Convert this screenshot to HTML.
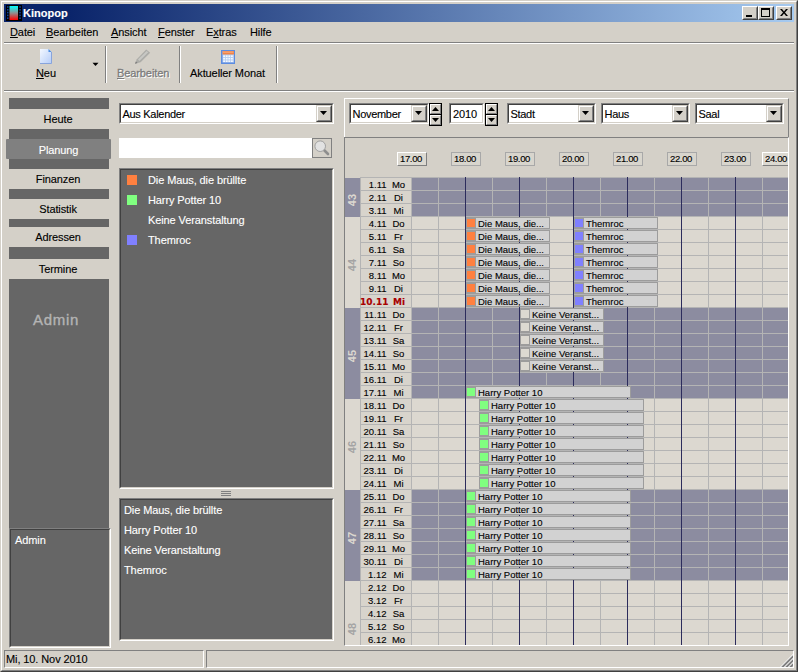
<!DOCTYPE html>
<html lang="de"><head><meta charset="utf-8"><title>Kinopop</title>
<style>
html,body{margin:0;padding:0;}
body{width:798px;height:672px;overflow:hidden;background:#d4d0c8;font-family:"Liberation Sans",sans-serif;font-size:11px;color:#000;}
#w{position:relative;width:798px;height:672px;overflow:hidden;background:#d4d0c8;}
#w div{position:absolute;box-sizing:border-box;-webkit-text-stroke:0.12px currentColor;}
.t{white-space:nowrap;line-height:13px;height:13px;letter-spacing:-0.1px;}
.tc{white-space:nowrap;line-height:13px;height:13px;text-align:center;letter-spacing:-0.1px;}
.tr{white-space:nowrap;line-height:13px;height:13px;text-align:right;letter-spacing:-0.1px;}
u{text-decoration:underline;text-decoration-thickness:1px;text-underline-offset:1px;}
.sunk{border:1px solid;border-color:#808080 #fff #fff #808080;}
.sunk>.in{left:0;top:0;right:0;bottom:0;border:1px solid;border-color:#404040 #d4d0c8 #d4d0c8 #404040;background:#fff;}
.btn{background:#d4d0c8;border:1px solid;border-color:#fff #404040 #404040 #fff;}
.btn>.in{left:0;top:0;right:0;bottom:0;border:1px solid;border-color:#d4d0c8 #808080 #808080 #d4d0c8;}
.cbtn{background:#d4d0c8;border:1px solid;border-color:#d4d0c8 #404040 #404040 #d4d0c8;}
.cbtn>.in{left:0;top:0;right:0;bottom:0;border:1px solid;border-color:#fff #808080 #808080 #fff;}
.arr{width:0;height:0;border-left:3.5px solid transparent;border-right:3.5px solid transparent;border-top:4px solid #000;}
.sep{width:2px;border-left:1px solid #808080;border-right:1px solid #fff;}
.dk{background:#666;}
.hl{background:#b4b4b4;height:1px;}
.vl{background:#b4b4b4;width:1px;}
.vd{background:#2c2c5c;width:1px;}
.ev{background:#9c9c9c;height:12px;overflow:hidden;font-size:9.5px;}
.ev i{position:absolute;left:1px;top:2px;width:8px;height:8px;display:block;}
.ev b{position:absolute;left:10px;top:1px;right:1px;bottom:1px;background:#d2d2d2;display:block;}
.ev span{position:absolute;left:12px;top:0px;line-height:13px;white-space:nowrap;}
.hb{background:#d8d5cd;border:1px solid #a8a8a8;width:30px;height:14px;line-height:11px;text-align:center;letter-spacing:-0.35px;font-size:9.5px;padding-right:2px;}
.hb.r{border-color:#fff #808080 #808080 #fff;background:#dcd9d1;}
.cd{font-size:9.5px;letter-spacing:0;}
.dc{background:#d8d4cc;}
</style></head><body><div id="w">

<div style="left:0px;top:0px;width:798px;height:672px;border:1px solid;border-color:#d4d0c8 #404040 #404040 #d4d0c8;"></div>
<div style="left:1px;top:1px;width:796px;height:670px;border:1px solid;border-color:#fff #808080 #808080 #fff;"></div>
<div style="left:4px;top:4px;width:790px;height:18px;background:linear-gradient(to right,#0a246a 0%,#0a246a 8%,#a6caf0 100%);"></div>
<svg style="position:absolute;left:6px;top:5px" width="16" height="16" viewBox="0 0 16 16"><defs><linearGradient id="fg" x1="0" y1="0" x2="0" y2="1"><stop offset="0" stop-color="#00ffff"/><stop offset="0.5" stop-color="#909090"/><stop offset="1" stop-color="#ff0000"/></linearGradient></defs><rect x="0" y="0" width="16" height="16" fill="#000"/><rect x="3.5" y="1" width="8.5" height="14" fill="url(#fg)"/><rect x="1" y="1.2" width="1.5" height="1.6" fill="#1040a0"/><rect x="13.3" y="1.2" width="1.5" height="1.6" fill="#1040a0"/><rect x="1" y="4" width="1.5" height="1.6" fill="#1040a0"/><rect x="13.3" y="4" width="1.5" height="1.6" fill="#1040a0"/><rect x="1" y="6.8" width="1.5" height="1.6" fill="#1040a0"/><rect x="13.3" y="6.8" width="1.5" height="1.6" fill="#1040a0"/><rect x="1" y="9.6" width="1.5" height="1.6" fill="#1040a0"/><rect x="13.3" y="9.6" width="1.5" height="1.6" fill="#1040a0"/><rect x="1" y="12.4" width="1.5" height="1.6" fill="#1040a0"/><rect x="13.3" y="12.4" width="1.5" height="1.6" fill="#1040a0"/></svg>
<div class="t" style="left:23px;top:7px;color:#fff;font-weight:bold;letter-spacing:0;">Kinopop</div>
<div class="btn" style="left:742px;top:6px;width:16px;height:14px;"><div class="in"></div><div style="left:3px;top:8px;width:6px;height:2px;background:#000;"></div></div>
<div class="btn" style="left:758px;top:6px;width:16px;height:14px;"><div class="in"></div><div style="left:2px;top:1px;width:9px;height:9px;border:1px solid #000;border-top:2px solid #000;"></div></div>
<div class="btn" style="left:776px;top:6px;width:16px;height:14px;"><div class="in"></div><svg style="position:absolute;left:3px;top:2px" width="8" height="7" viewBox="0 0 8 7"><path d="M0 0h2l2 2.5L6 0h2L5 3.5 8 7H6L4 4.5 2 7H0l3-3.5z" fill="#000"/></svg></div>
<div class="t" style="left:10px;top:26px;"><u>D</u>atei</div>
<div class="t" style="left:46px;top:26px;"><u>B</u>earbeiten</div>
<div class="t" style="left:111px;top:26px;"><u>A</u>nsicht</div>
<div class="t" style="left:158px;top:26px;"><u>F</u>enster</div>
<div class="t" style="left:206px;top:26px;">E<u>x</u>tras</div>
<div class="t" style="left:250px;top:26px;">Hilfe</div>
<div style="left:4px;top:42px;width:790px;height:2px;border-top:1px solid #808080;border-bottom:1px solid #fff;"></div>
<svg style="position:absolute;left:39px;top:48px" width="14" height="17" viewBox="0 0 14 17"><defs><linearGradient id="pg" x1="0" y1="0" x2="1" y2="1"><stop offset="0" stop-color="#f4f8ff"/><stop offset="1" stop-color="#b4ccf8"/></linearGradient></defs><path d="M1 1h8.5l3 3v12h-11.5z" fill="url(#pg)"/><path d="M1 15.5h11.5v-11.5" fill="none" stroke="#88a4dc" stroke-width="1"/><path d="M9.5 1l3 3h-3z" fill="#4c8ce0"/></svg>
<div class="t" style="left:36px;top:67px;"><u>N</u>eu</div>
<svg style="position:absolute;left:92px;top:62px" width="8" height="5" viewBox="0 0 8 5"><path d="M0.5 0.8h6L3.5 4z" fill="#000"/></svg>
<div class="sep" style="left:105px;top:46px;width:2px;height:37px;"></div>
<svg style="position:absolute;left:134px;top:49px" width="18" height="17" viewBox="0 0 18 17"><defs><linearGradient id="pn" x1="0" y1="0" x2="1" y2="1"><stop offset="0" stop-color="#d4d4d0"/><stop offset="1" stop-color="#a4a4a0"/></linearGradient></defs><path d="M1 14.8L2.8 10.2 12.2 0.6 16.2 3.8 6.6 13.2z" fill="#acaca8"/><path d="M4 10.6L12.6 2 14.2 3.2 5.4 12z" fill="#c8c8c4"/><path d="M1 14.8l0.9-2.4 1.6 1.5z" fill="#787878"/></svg>
<div class="t" style="left:118px;top:68px;color:#fff;"><u>B</u>earbeiten</div>
<div class="t" style="left:117px;top:67px;color:#7c7c7c;-webkit-text-stroke:0.3px #7c7c7c;"><u>B</u>earbeiten</div>
<div class="sep" style="left:179px;top:46px;width:2px;height:37px;"></div>
<svg style="position:absolute;left:221px;top:50px" width="14" height="14" viewBox="0 0 14 14"><rect x="0" y="0" width="14" height="14" fill="#5c8ce0"/><rect x="1.5" y="1" width="11.5" height="11.5" fill="#b4ccf0"/><rect x="1.5" y="1" width="11.5" height="3.5" fill="#f08448"/><rect x="2" y="1.6" width="10.5" height="1" fill="#f8b088"/><rect x="2.2" y="5.4" width="1.8" height="1.6" fill="#f4f8ff"/><rect x="2.2" y="7.9" width="1.8" height="1.6" fill="#f4f8ff"/><rect x="2.2" y="10.4" width="1.8" height="1.6" fill="#f4f8ff"/><rect x="4.8" y="5.4" width="1.8" height="1.6" fill="#f4f8ff"/><rect x="4.8" y="7.9" width="1.8" height="1.6" fill="#f4f8ff"/><rect x="4.8" y="10.4" width="1.8" height="1.6" fill="#f4f8ff"/><rect x="7.4" y="5.4" width="1.8" height="1.6" fill="#f4f8ff"/><rect x="7.4" y="7.9" width="1.8" height="1.6" fill="#f4f8ff"/><rect x="7.4" y="10.4" width="1.8" height="1.6" fill="#f4f8ff"/><rect x="10" y="5.4" width="1.8" height="1.6" fill="#f4f8ff"/><rect x="10" y="7.9" width="1.8" height="1.6" fill="#f4f8ff"/><rect x="10" y="10.4" width="1.8" height="1.6" fill="#f4f8ff"/></svg>
<div class="t" style="left:190px;top:67px;">Aktueller Monat</div>
<div class="sep" style="left:276px;top:46px;width:2px;height:37px;"></div>
<div style="left:4px;top:90px;width:790px;height:2px;border-top:1px solid #808080;border-bottom:1px solid #fff;"></div>
<div class="dk" style="left:9px;top:98px;width:100px;height:430px;"></div>
<div style="left:9px;top:109px;width:100px;height:20px;background:#d4d0c8;line-height:20px;text-align:center;letter-spacing:-0.1px;padding-right:2px;">Heute</div>
<div style="left:6px;top:139px;width:105px;height:20px;background:#808080;color:#fff;line-height:22px;text-align:center;letter-spacing:-0.1px;border-radius:1px;">Planung</div>
<div style="left:9px;top:169px;width:100px;height:20px;background:#d4d0c8;line-height:20px;text-align:center;letter-spacing:-0.1px;padding-right:2px;">Finanzen</div>
<div style="left:9px;top:199px;width:100px;height:20px;background:#d4d0c8;line-height:20px;text-align:center;letter-spacing:-0.1px;padding-right:2px;">Statistik</div>
<div style="left:9px;top:227px;width:100px;height:20px;background:#d4d0c8;line-height:20px;text-align:center;letter-spacing:-0.1px;padding-right:2px;">Adressen</div>
<div style="left:9px;top:259px;width:100px;height:20px;background:#d4d0c8;line-height:20px;text-align:center;letter-spacing:-0.1px;padding-right:2px;">Termine</div>
<div style="left:6px;top:309px;width:100px;height:22px;color:#b4b4b4;font-size:15px;line-height:22px;text-align:center;-webkit-text-stroke:0.35px #b4b4b4;letter-spacing:0.7px;">Admin</div>
<div class="sunk" style="left:9px;top:528px;width:102px;height:120px;"><div class="in" style="background:#666"></div></div>
<div class="t" style="left:15px;top:534px;color:#fff;">Admin</div>
<div class="sunk" style="left:119px;top:103px;width:215px;height:21px;"><div class="in"></div></div><div class="cbtn" style="left:316px;top:105px;width:16px;height:17px;"><div class="in"></div><svg style="position:absolute;left:3px;top:5px" width="7" height="4" viewBox="0 0 7 4"><path d="M0 0h7L3.5 4z" fill="#000"/></svg></div><div class="t" style="left:122.5px;top:108px;letter-spacing:-0.3px;">Aus Kalender</div>
<div style="left:119px;top:138px;width:193px;height:20px;background:#fff;"></div>
<div style="left:312px;top:138px;width:20px;height:20px;border:1px solid #808080;background:#d4d0c8;"><svg style="position:absolute;left:0;top:0" width="18" height="18" viewBox="0 0 18 18"><line x1="11" y1="11" x2="15" y2="15" stroke="#8e8e8e" stroke-width="2.6" stroke-linecap="round"/><circle cx="7.2" cy="7.2" r="5.3" fill="#e2e2e2" stroke="#a0a0a0" stroke-width="1"/></svg></div>
<div class="sunk" style="left:119px;top:168px;width:215px;height:321px;"><div class="in" style="background:#666"></div></div>
<div style="left:127px;top:175px;width:10px;height:10px;background:#ff8040;"></div>
<div class="t" style="left:148px;top:174px;color:#fff;">Die Maus, die brüllte</div>
<div style="left:127px;top:195px;width:10px;height:10px;background:#80ff80;"></div>
<div class="t" style="left:148px;top:194px;color:#fff;">Harry Potter 10</div>
<div class="t" style="left:148px;top:214px;color:#fff;">Keine Veranstaltung</div>
<div style="left:127px;top:235px;width:10px;height:10px;background:#8080ff;"></div>
<div class="t" style="left:148px;top:234px;color:#fff;">Themroc</div>
<div style="left:221px;top:491px;width:10px;height:1px;background:#808080;"></div>
<div style="left:221px;top:493px;width:10px;height:1px;background:#808080;"></div>
<div style="left:221px;top:495px;width:10px;height:1px;background:#808080;"></div>
<div class="sunk" style="left:119px;top:498px;width:215px;height:143px;"><div class="in" style="background:#666"></div></div>
<div class="t" style="left:124px;top:504px;color:#fff;">Die Maus, die brüllte</div>
<div class="t" style="left:124px;top:524px;color:#fff;">Harry Potter 10</div>
<div class="t" style="left:124px;top:544px;color:#fff;">Keine Veranstaltung</div>
<div class="t" style="left:124px;top:564px;color:#fff;">Themroc</div>
<div style="left:344px;top:98px;width:445px;height:40px;border:1px solid;border-color:#fff #808080 #808080 #fff;"></div>
<div class="sunk" style="left:349px;top:103px;width:80px;height:21px;"><div class="in"></div></div><div class="cbtn" style="left:411px;top:105px;width:16px;height:17px;"><div class="in"></div><svg style="position:absolute;left:3px;top:5px" width="7" height="4" viewBox="0 0 7 4"><path d="M0 0h7L3.5 4z" fill="#000"/></svg></div><div class="t" style="left:352.5px;top:108px;letter-spacing:-0.3px;">November</div>
<div style="left:429px;top:103px;width:13px;height:12px;background:#d4d0c8;border:1px solid #000;"><div style="left:0px;top:0px;width:11px;height:10px;border:1px solid;border-color:#fff #808080 #808080 #fff;"></div><svg style="position:absolute;left:2px;top:3px" width="7" height="4" viewBox="0 0 7 4"><path d="M0 4h7L3.5 0z" fill="#000"/></svg></div><div style="left:429px;top:114px;width:13px;height:12px;background:#d4d0c8;border:1px solid #000;"><div style="left:0px;top:0px;width:11px;height:10px;border:1px solid;border-color:#fff #808080 #808080 #fff;"></div><svg style="position:absolute;left:2px;top:3px" width="7" height="4" viewBox="0 0 7 4"><path d="M0 0h7L3.5 4z" fill="#000"/></svg></div>
<div class="sunk" style="left:449px;top:103px;width:35px;height:21px;"><div class="in"></div></div>
<div class="t" style="left:453px;top:108px;">2010</div>
<div style="left:485px;top:103px;width:13px;height:12px;background:#d4d0c8;border:1px solid #000;"><div style="left:0px;top:0px;width:11px;height:10px;border:1px solid;border-color:#fff #808080 #808080 #fff;"></div><svg style="position:absolute;left:2px;top:3px" width="7" height="4" viewBox="0 0 7 4"><path d="M0 4h7L3.5 0z" fill="#000"/></svg></div><div style="left:485px;top:114px;width:13px;height:12px;background:#d4d0c8;border:1px solid #000;"><div style="left:0px;top:0px;width:11px;height:10px;border:1px solid;border-color:#fff #808080 #808080 #fff;"></div><svg style="position:absolute;left:2px;top:3px" width="7" height="4" viewBox="0 0 7 4"><path d="M0 0h7L3.5 4z" fill="#000"/></svg></div>
<div class="sunk" style="left:507px;top:103px;width:89px;height:21px;"><div class="in"></div></div><div class="cbtn" style="left:578px;top:105px;width:16px;height:17px;"><div class="in"></div><svg style="position:absolute;left:3px;top:5px" width="7" height="4" viewBox="0 0 7 4"><path d="M0 0h7L3.5 4z" fill="#000"/></svg></div><div class="t" style="left:510.5px;top:108px;letter-spacing:-0.3px;">Stadt</div>
<div class="sunk" style="left:601px;top:103px;width:89px;height:21px;"><div class="in"></div></div><div class="cbtn" style="left:672px;top:105px;width:16px;height:17px;"><div class="in"></div><svg style="position:absolute;left:3px;top:5px" width="7" height="4" viewBox="0 0 7 4"><path d="M0 0h7L3.5 4z" fill="#000"/></svg></div><div class="t" style="left:604.5px;top:108px;letter-spacing:-0.3px;">Haus</div>
<div class="sunk" style="left:695px;top:103px;width:89px;height:21px;"><div class="in"></div></div><div class="cbtn" style="left:766px;top:105px;width:16px;height:17px;"><div class="in"></div><svg style="position:absolute;left:3px;top:5px" width="7" height="4" viewBox="0 0 7 4"><path d="M0 0h7L3.5 4z" fill="#000"/></svg></div><div class="t" style="left:698.5px;top:108px;letter-spacing:-0.3px;">Saal</div>
<div style="left:344px;top:137px;width:445px;height:509px;border:1px solid;border-color:#808080 #fff #fff #808080;overflow:hidden;"><div class="hb r" style="left:52px;top:14px;width:30px;height:14px;">17.00</div>
<div class="hb" style="left:106px;top:14px;width:30px;height:14px;">18.00</div>
<div class="hb" style="left:160px;top:14px;width:30px;height:14px;">19.00</div>
<div class="hb" style="left:214px;top:14px;width:30px;height:14px;">20.00</div>
<div class="hb" style="left:268px;top:14px;width:30px;height:14px;">21.00</div>
<div class="hb" style="left:322px;top:14px;width:30px;height:14px;">22.00</div>
<div class="hb" style="left:376px;top:14px;width:30px;height:14px;">23.00</div>
<div class="hb r" style="left:417px;top:14px;width:30px;height:14px;">24.00</div>
<div style="left:0px;top:40px;width:15px;height:39px;background:#8c8ca0;"></div>
<div class="dc" style="left:16px;top:40px;width:50px;height:39px;"></div>
<div style="left:67px;top:40px;width:380px;height:39px;background:#8c8ca0;"></div>
<div style="left:-11px;top:54.5px;width:36px;height:14px;line-height:14px;text-align:center;transform:rotate(-90deg);font-size:11px;font-weight:bold;-webkit-text-stroke:0;color:#dcd8d0;">43</div>
<div style="left:0px;top:79px;width:15px;height:91px;background:#dcd8d0;"></div>
<div class="dc" style="left:16px;top:79px;width:50px;height:91px;"></div>
<div style="left:67px;top:79px;width:380px;height:91px;background:#dcd8d0;"></div>
<div style="left:-11px;top:119.5px;width:36px;height:14px;line-height:14px;text-align:center;transform:rotate(-90deg);font-size:11px;font-weight:bold;-webkit-text-stroke:0;color:#a4a4a4;">44</div>
<div style="left:0px;top:170px;width:15px;height:91px;background:#8c8ca0;"></div>
<div class="dc" style="left:16px;top:170px;width:50px;height:91px;"></div>
<div style="left:67px;top:170px;width:380px;height:91px;background:#8c8ca0;"></div>
<div style="left:-11px;top:210.5px;width:36px;height:14px;line-height:14px;text-align:center;transform:rotate(-90deg);font-size:11px;font-weight:bold;-webkit-text-stroke:0;color:#dcd8d0;">45</div>
<div style="left:0px;top:261px;width:15px;height:91px;background:#dcd8d0;"></div>
<div class="dc" style="left:16px;top:261px;width:50px;height:91px;"></div>
<div style="left:67px;top:261px;width:380px;height:91px;background:#dcd8d0;"></div>
<div style="left:-11px;top:301.5px;width:36px;height:14px;line-height:14px;text-align:center;transform:rotate(-90deg);font-size:11px;font-weight:bold;-webkit-text-stroke:0;color:#a4a4a4;">46</div>
<div style="left:0px;top:352px;width:15px;height:91px;background:#8c8ca0;"></div>
<div class="dc" style="left:16px;top:352px;width:50px;height:91px;"></div>
<div style="left:67px;top:352px;width:380px;height:91px;background:#8c8ca0;"></div>
<div style="left:-11px;top:392.5px;width:36px;height:14px;line-height:14px;text-align:center;transform:rotate(-90deg);font-size:11px;font-weight:bold;-webkit-text-stroke:0;color:#dcd8d0;">47</div>
<div style="left:0px;top:443px;width:15px;height:91px;background:#dcd8d0;"></div>
<div class="dc" style="left:16px;top:443px;width:50px;height:91px;"></div>
<div style="left:67px;top:443px;width:380px;height:91px;background:#dcd8d0;"></div>
<div style="left:-11px;top:483.5px;width:36px;height:14px;line-height:14px;text-align:center;transform:rotate(-90deg);font-size:11px;font-weight:bold;-webkit-text-stroke:0;color:#a4a4a4;">48</div>
<div class="hl" style="left:15px;top:39px;width:432px;height:1px;"></div>
<div class="hl" style="left:15px;top:52px;width:432px;height:1px;"></div>
<div class="hl" style="left:15px;top:65px;width:432px;height:1px;"></div>
<div class="hl" style="left:15px;top:78px;width:432px;height:1px;"></div>
<div class="hl" style="left:15px;top:91px;width:432px;height:1px;"></div>
<div class="hl" style="left:15px;top:104px;width:432px;height:1px;"></div>
<div class="hl" style="left:15px;top:117px;width:432px;height:1px;"></div>
<div class="hl" style="left:15px;top:130px;width:432px;height:1px;"></div>
<div class="hl" style="left:15px;top:143px;width:432px;height:1px;"></div>
<div class="hl" style="left:15px;top:156px;width:432px;height:1px;"></div>
<div class="hl" style="left:15px;top:169px;width:432px;height:1px;"></div>
<div class="hl" style="left:15px;top:182px;width:432px;height:1px;"></div>
<div class="hl" style="left:15px;top:195px;width:432px;height:1px;"></div>
<div class="hl" style="left:15px;top:208px;width:432px;height:1px;"></div>
<div class="hl" style="left:15px;top:221px;width:432px;height:1px;"></div>
<div class="hl" style="left:15px;top:234px;width:432px;height:1px;"></div>
<div class="hl" style="left:15px;top:247px;width:432px;height:1px;"></div>
<div class="hl" style="left:15px;top:260px;width:432px;height:1px;"></div>
<div class="hl" style="left:15px;top:273px;width:432px;height:1px;"></div>
<div class="hl" style="left:15px;top:286px;width:432px;height:1px;"></div>
<div class="hl" style="left:15px;top:299px;width:432px;height:1px;"></div>
<div class="hl" style="left:15px;top:312px;width:432px;height:1px;"></div>
<div class="hl" style="left:15px;top:325px;width:432px;height:1px;"></div>
<div class="hl" style="left:15px;top:338px;width:432px;height:1px;"></div>
<div class="hl" style="left:15px;top:351px;width:432px;height:1px;"></div>
<div class="hl" style="left:15px;top:364px;width:432px;height:1px;"></div>
<div class="hl" style="left:15px;top:377px;width:432px;height:1px;"></div>
<div class="hl" style="left:15px;top:390px;width:432px;height:1px;"></div>
<div class="hl" style="left:15px;top:403px;width:432px;height:1px;"></div>
<div class="hl" style="left:15px;top:416px;width:432px;height:1px;"></div>
<div class="hl" style="left:15px;top:429px;width:432px;height:1px;"></div>
<div class="hl" style="left:15px;top:442px;width:432px;height:1px;"></div>
<div class="hl" style="left:15px;top:455px;width:432px;height:1px;"></div>
<div class="hl" style="left:15px;top:468px;width:432px;height:1px;"></div>
<div class="hl" style="left:15px;top:481px;width:432px;height:1px;"></div>
<div class="hl" style="left:15px;top:494px;width:432px;height:1px;"></div>
<div class="hl" style="left:15px;top:507px;width:432px;height:1px;"></div>
<div class="vl" style="left:15px;top:39px;width:1px;height:480px;"></div>
<div class="vl" style="left:66px;top:39px;width:1px;height:480px;"></div>
<div class="vl" style="left:93px;top:39px;width:1px;height:480px;"></div>
<div class="vd" style="left:120px;top:39px;width:1px;height:480px;"></div>
<div class="vl" style="left:147px;top:39px;width:1px;height:480px;"></div>
<div class="vd" style="left:174px;top:39px;width:1px;height:480px;"></div>
<div class="vl" style="left:201px;top:39px;width:1px;height:480px;"></div>
<div class="vd" style="left:228px;top:39px;width:1px;height:480px;"></div>
<div class="vl" style="left:255px;top:39px;width:1px;height:480px;"></div>
<div class="vd" style="left:282px;top:39px;width:1px;height:480px;"></div>
<div class="vl" style="left:309px;top:39px;width:1px;height:480px;"></div>
<div class="vd" style="left:336px;top:39px;width:1px;height:480px;"></div>
<div class="vl" style="left:363px;top:39px;width:1px;height:480px;"></div>
<div class="vd" style="left:390px;top:39px;width:1px;height:480px;"></div>
<div class="vl" style="left:417px;top:39px;width:1px;height:480px;"></div>
<div class="vd" style="left:444px;top:39px;width:1px;height:480px;"></div>
<div class="tr cd" style="left:11.5px;top:40px;width:30px;height:13px;">1.11</div>
<div class="tc cd" style="left:42.5px;top:40px;width:22px;height:13px;">Mo</div>
<div class="tr cd" style="left:11.5px;top:53px;width:30px;height:13px;">2.11</div>
<div class="tc cd" style="left:42.5px;top:53px;width:22px;height:13px;">Di</div>
<div class="tr cd" style="left:11.5px;top:66px;width:30px;height:13px;">3.11</div>
<div class="tc cd" style="left:42.5px;top:66px;width:22px;height:13px;">Mi</div>
<div class="tr cd" style="left:11.5px;top:79px;width:30px;height:13px;">4.11</div>
<div class="tc cd" style="left:42.5px;top:79px;width:22px;height:13px;">Do</div>
<div class="tr cd" style="left:11.5px;top:92px;width:30px;height:13px;">5.11</div>
<div class="tc cd" style="left:42.5px;top:92px;width:22px;height:13px;">Fr</div>
<div class="tr cd" style="left:11.5px;top:105px;width:30px;height:13px;">6.11</div>
<div class="tc cd" style="left:42.5px;top:105px;width:22px;height:13px;">Sa</div>
<div class="tr cd" style="left:11.5px;top:118px;width:30px;height:13px;">7.11</div>
<div class="tc cd" style="left:42.5px;top:118px;width:22px;height:13px;">So</div>
<div class="tr cd" style="left:11.5px;top:131px;width:30px;height:13px;">8.11</div>
<div class="tc cd" style="left:42.5px;top:131px;width:22px;height:13px;">Mo</div>
<div class="tr cd" style="left:11.5px;top:144px;width:30px;height:13px;">9.11</div>
<div class="tc cd" style="left:42.5px;top:144px;width:22px;height:13px;">Di</div>
<div class="tr cd" style="left:15px;top:158px;width:32px;height:13px;color:#a80000;font-weight:bold;letter-spacing:0;font-size:9px;font-family:'DejaVu Sans','Liberation Sans',sans-serif;text-align:left;">10.11</div>
<div class="tc cd" style="left:43px;top:158px;width:22px;height:13px;color:#a80000;font-weight:bold;letter-spacing:0;font-size:9px;font-family:'DejaVu Sans','Liberation Sans',sans-serif;">Mi</div>
<div class="tr cd" style="left:11.5px;top:170px;width:30px;height:13px;">11.11</div>
<div class="tc cd" style="left:42.5px;top:170px;width:22px;height:13px;">Do</div>
<div class="tr cd" style="left:11.5px;top:183px;width:30px;height:13px;">12.11</div>
<div class="tc cd" style="left:42.5px;top:183px;width:22px;height:13px;">Fr</div>
<div class="tr cd" style="left:11.5px;top:196px;width:30px;height:13px;">13.11</div>
<div class="tc cd" style="left:42.5px;top:196px;width:22px;height:13px;">Sa</div>
<div class="tr cd" style="left:11.5px;top:209px;width:30px;height:13px;">14.11</div>
<div class="tc cd" style="left:42.5px;top:209px;width:22px;height:13px;">So</div>
<div class="tr cd" style="left:11.5px;top:222px;width:30px;height:13px;">15.11</div>
<div class="tc cd" style="left:42.5px;top:222px;width:22px;height:13px;">Mo</div>
<div class="tr cd" style="left:11.5px;top:235px;width:30px;height:13px;">16.11</div>
<div class="tc cd" style="left:42.5px;top:235px;width:22px;height:13px;">Di</div>
<div class="tr cd" style="left:11.5px;top:248px;width:30px;height:13px;">17.11</div>
<div class="tc cd" style="left:42.5px;top:248px;width:22px;height:13px;">Mi</div>
<div class="tr cd" style="left:11.5px;top:261px;width:30px;height:13px;">18.11</div>
<div class="tc cd" style="left:42.5px;top:261px;width:22px;height:13px;">Do</div>
<div class="tr cd" style="left:11.5px;top:274px;width:30px;height:13px;">19.11</div>
<div class="tc cd" style="left:42.5px;top:274px;width:22px;height:13px;">Fr</div>
<div class="tr cd" style="left:11.5px;top:287px;width:30px;height:13px;">20.11</div>
<div class="tc cd" style="left:42.5px;top:287px;width:22px;height:13px;">Sa</div>
<div class="tr cd" style="left:11.5px;top:300px;width:30px;height:13px;">21.11</div>
<div class="tc cd" style="left:42.5px;top:300px;width:22px;height:13px;">So</div>
<div class="tr cd" style="left:11.5px;top:313px;width:30px;height:13px;">22.11</div>
<div class="tc cd" style="left:42.5px;top:313px;width:22px;height:13px;">Mo</div>
<div class="tr cd" style="left:11.5px;top:326px;width:30px;height:13px;">23.11</div>
<div class="tc cd" style="left:42.5px;top:326px;width:22px;height:13px;">Di</div>
<div class="tr cd" style="left:11.5px;top:339px;width:30px;height:13px;">24.11</div>
<div class="tc cd" style="left:42.5px;top:339px;width:22px;height:13px;">Mi</div>
<div class="tr cd" style="left:11.5px;top:352px;width:30px;height:13px;">25.11</div>
<div class="tc cd" style="left:42.5px;top:352px;width:22px;height:13px;">Do</div>
<div class="tr cd" style="left:11.5px;top:365px;width:30px;height:13px;">26.11</div>
<div class="tc cd" style="left:42.5px;top:365px;width:22px;height:13px;">Fr</div>
<div class="tr cd" style="left:11.5px;top:378px;width:30px;height:13px;">27.11</div>
<div class="tc cd" style="left:42.5px;top:378px;width:22px;height:13px;">Sa</div>
<div class="tr cd" style="left:11.5px;top:391px;width:30px;height:13px;">28.11</div>
<div class="tc cd" style="left:42.5px;top:391px;width:22px;height:13px;">So</div>
<div class="tr cd" style="left:11.5px;top:404px;width:30px;height:13px;">29.11</div>
<div class="tc cd" style="left:42.5px;top:404px;width:22px;height:13px;">Mo</div>
<div class="tr cd" style="left:11.5px;top:417px;width:30px;height:13px;">30.11</div>
<div class="tc cd" style="left:42.5px;top:417px;width:22px;height:13px;">Di</div>
<div class="tr cd" style="left:11.5px;top:430px;width:30px;height:13px;">1.12</div>
<div class="tc cd" style="left:42.5px;top:430px;width:22px;height:13px;">Mi</div>
<div class="tr cd" style="left:11.5px;top:443px;width:30px;height:13px;">2.12</div>
<div class="tc cd" style="left:42.5px;top:443px;width:22px;height:13px;">Do</div>
<div class="tr cd" style="left:11.5px;top:456px;width:30px;height:13px;">3.12</div>
<div class="tc cd" style="left:42.5px;top:456px;width:22px;height:13px;">Fr</div>
<div class="tr cd" style="left:11.5px;top:469px;width:30px;height:13px;">4.12</div>
<div class="tc cd" style="left:42.5px;top:469px;width:22px;height:13px;">Sa</div>
<div class="tr cd" style="left:11.5px;top:482px;width:30px;height:13px;">5.12</div>
<div class="tc cd" style="left:42.5px;top:482px;width:22px;height:13px;">So</div>
<div class="tr cd" style="left:11.5px;top:495px;width:30px;height:13px;">6.12</div>
<div class="tc cd" style="left:42.5px;top:495px;width:22px;height:13px;">Mo</div>
<div class="ev" style="left:121px;top:79px;width:84px;height:12px;"><i style="background:#ff8040;"></i><b></b><span>Die Maus, die...</span></div>
<div class="ev" style="left:229px;top:79px;width:84px;height:12px;"><i style="background:#8080ff;"></i><b></b><span>Themroc</span></div>
<div class="ev" style="left:121px;top:92px;width:84px;height:12px;"><i style="background:#ff8040;"></i><b></b><span>Die Maus, die...</span></div>
<div class="ev" style="left:229px;top:92px;width:84px;height:12px;"><i style="background:#8080ff;"></i><b></b><span>Themroc</span></div>
<div class="ev" style="left:121px;top:105px;width:84px;height:12px;"><i style="background:#ff8040;"></i><b></b><span>Die Maus, die...</span></div>
<div class="ev" style="left:229px;top:105px;width:84px;height:12px;"><i style="background:#8080ff;"></i><b></b><span>Themroc</span></div>
<div class="ev" style="left:121px;top:118px;width:84px;height:12px;"><i style="background:#ff8040;"></i><b></b><span>Die Maus, die...</span></div>
<div class="ev" style="left:229px;top:118px;width:84px;height:12px;"><i style="background:#8080ff;"></i><b></b><span>Themroc</span></div>
<div class="ev" style="left:121px;top:131px;width:84px;height:12px;"><i style="background:#ff8040;"></i><b></b><span>Die Maus, die...</span></div>
<div class="ev" style="left:229px;top:131px;width:84px;height:12px;"><i style="background:#8080ff;"></i><b></b><span>Themroc</span></div>
<div class="ev" style="left:121px;top:144px;width:84px;height:12px;"><i style="background:#ff8040;"></i><b></b><span>Die Maus, die...</span></div>
<div class="ev" style="left:229px;top:144px;width:84px;height:12px;"><i style="background:#8080ff;"></i><b></b><span>Themroc</span></div>
<div class="ev" style="left:121px;top:157px;width:84px;height:12px;"><i style="background:#ff8040;"></i><b></b><span>Die Maus, die...</span></div>
<div class="ev" style="left:229px;top:157px;width:84px;height:12px;"><i style="background:#8080ff;"></i><b></b><span>Themroc</span></div>
<div class="ev" style="left:175px;top:170px;width:84px;height:12px;"><i style="background:#dcd9d1;"></i><b></b><span>Keine Veranst...</span></div>
<div class="ev" style="left:175px;top:183px;width:84px;height:12px;"><i style="background:#dcd9d1;"></i><b></b><span>Keine Veranst...</span></div>
<div class="ev" style="left:175px;top:196px;width:84px;height:12px;"><i style="background:#dcd9d1;"></i><b></b><span>Keine Veranst...</span></div>
<div class="ev" style="left:175px;top:209px;width:84px;height:12px;"><i style="background:#dcd9d1;"></i><b></b><span>Keine Veranst...</span></div>
<div class="ev" style="left:175px;top:222px;width:84px;height:12px;"><i style="background:#dcd9d1;"></i><b></b><span>Keine Veranst...</span></div>
<div class="ev" style="left:121px;top:248px;width:165px;height:12px;"><i style="background:#80ff80;"></i><b></b><span>Harry Potter 10</span></div>
<div class="ev" style="left:134px;top:261px;width:165px;height:12px;"><i style="background:#80ff80;"></i><b></b><span>Harry Potter 10</span></div>
<div class="ev" style="left:134px;top:274px;width:165px;height:12px;"><i style="background:#80ff80;"></i><b></b><span>Harry Potter 10</span></div>
<div class="ev" style="left:134px;top:287px;width:165px;height:12px;"><i style="background:#80ff80;"></i><b></b><span>Harry Potter 10</span></div>
<div class="ev" style="left:134px;top:300px;width:165px;height:12px;"><i style="background:#80ff80;"></i><b></b><span>Harry Potter 10</span></div>
<div class="ev" style="left:134px;top:313px;width:165px;height:12px;"><i style="background:#80ff80;"></i><b></b><span>Harry Potter 10</span></div>
<div class="ev" style="left:134px;top:326px;width:165px;height:12px;"><i style="background:#80ff80;"></i><b></b><span>Harry Potter 10</span></div>
<div class="ev" style="left:134px;top:339px;width:165px;height:12px;"><i style="background:#80ff80;"></i><b></b><span>Harry Potter 10</span></div>
<div class="ev" style="left:121px;top:352px;width:165px;height:12px;"><i style="background:#80ff80;"></i><b></b><span>Harry Potter 10</span></div>
<div class="ev" style="left:121px;top:365px;width:165px;height:12px;"><i style="background:#80ff80;"></i><b></b><span>Harry Potter 10</span></div>
<div class="ev" style="left:121px;top:378px;width:165px;height:12px;"><i style="background:#80ff80;"></i><b></b><span>Harry Potter 10</span></div>
<div class="ev" style="left:121px;top:391px;width:165px;height:12px;"><i style="background:#80ff80;"></i><b></b><span>Harry Potter 10</span></div>
<div class="ev" style="left:121px;top:404px;width:165px;height:12px;"><i style="background:#80ff80;"></i><b></b><span>Harry Potter 10</span></div>
<div class="ev" style="left:121px;top:417px;width:165px;height:12px;"><i style="background:#80ff80;"></i><b></b><span>Harry Potter 10</span></div>
<div class="ev" style="left:121px;top:430px;width:165px;height:12px;"><i style="background:#80ff80;"></i><b></b><span>Harry Potter 10</span></div></div>
<div style="left:4px;top:650px;width:200px;height:18px;border:1px solid;border-color:#808080 #fff #fff #808080;"></div>
<div style="left:206px;top:650px;width:588px;height:18px;border:1px solid;border-color:#808080 #fff #fff #808080;"></div>
<div class="t" style="left:6px;top:653px;">Mi, 10. Nov 2010</div>
<svg style="position:absolute;left:780px;top:654px" width="13" height="13" viewBox="0 0 13 13"><path d="M13 0v13h-13z" fill="#d4d0c8"/><line x1="0.5" y1="13.5" x2="13.5" y2="0.5" stroke="#fff" stroke-width="1.3"/><line x1="2" y1="13.5" x2="13.5" y2="2" stroke="#808080" stroke-width="2"/><line x1="4.5" y1="13.5" x2="13.5" y2="4.5" stroke="#fff" stroke-width="1.3"/><line x1="6" y1="13.5" x2="13.5" y2="6" stroke="#808080" stroke-width="2"/><line x1="8.5" y1="13.5" x2="13.5" y2="8.5" stroke="#fff" stroke-width="1.3"/><line x1="10" y1="13.5" x2="13.5" y2="10" stroke="#808080" stroke-width="2"/></svg>
</div></body></html>
